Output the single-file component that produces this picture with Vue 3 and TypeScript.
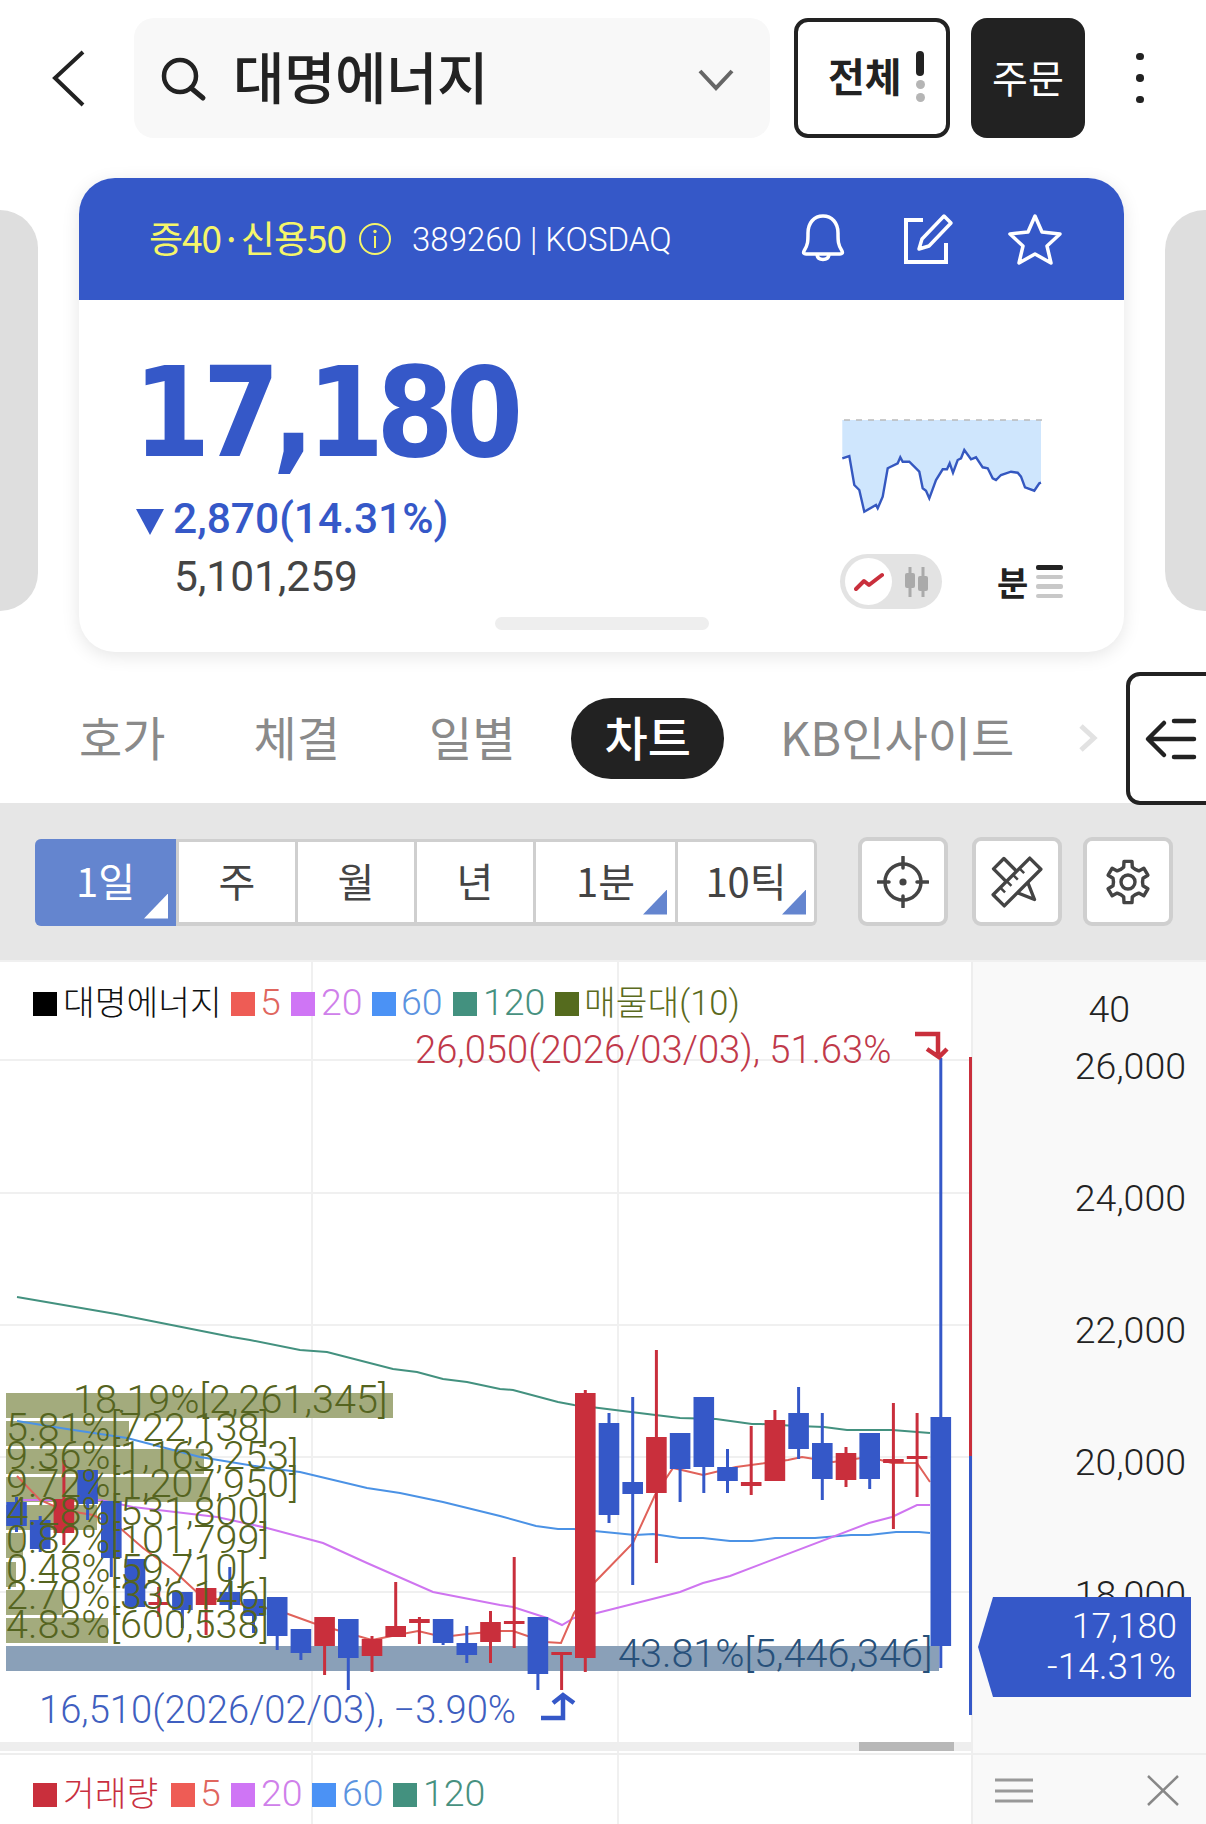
<script setup lang="ts">
import { computed } from 'vue'

interface Candle {
  top: number
  bottom: number
  high: number
  low: number
  up: boolean
}

// 캔들 데이터 (화면 좌표)
const rawCandles: [number, number, number, number, boolean][] = [
  [1502, 1526, 1497, 1532, false],
  [1520, 1549, 1516, 1552, false],
  [1499, 1533, 1460, 1545, true],
  [1470, 1504, 1470, 1520, false],
  [1501, 1558, 1501, 1577, false],
  [1559, 1607, 1559, 1607, false],
  [1602, 1605, 1587, 1617, true],
  [1592, 1610, 1592, 1628, false],
  [1588, 1605, 1588, 1635, true],
  [1592, 1605, 1567, 1610, false],
  [1599, 1616, 1599, 1633, false],
  [1597, 1636, 1597, 1650, false],
  [1629, 1653, 1629, 1660, false],
  [1617, 1646, 1617, 1675, true],
  [1619, 1658, 1619, 1690, false],
  [1639, 1656, 1636, 1672, true],
  [1626, 1637, 1582, 1637, true],
  [1619, 1623, 1617, 1644, true],
  [1619, 1643, 1619, 1645, false],
  [1643, 1655, 1626, 1663, false],
  [1622, 1642, 1611, 1663, true],
  [1621, 1624, 1557, 1648, true],
  [1617, 1674, 1617, 1690, false],
  [1652, 1655, 1652, 1690, true],
  [1393, 1658, 1390, 1672, true],
  [1423, 1515, 1413, 1523, false],
  [1482, 1494, 1397, 1585, false],
  [1437, 1493, 1350, 1563, true],
  [1433, 1469, 1433, 1502, false],
  [1397, 1467, 1397, 1493, false],
  [1467, 1481, 1449, 1493, false],
  [1482, 1486, 1426, 1495, true],
  [1420, 1481, 1410, 1481, true],
  [1413, 1449, 1387, 1459, false],
  [1443, 1479, 1413, 1500, false],
  [1453, 1480, 1447, 1487, true],
  [1433, 1479, 1433, 1489, false],
  [1459, 1463, 1403, 1529, true],
  [1456, 1459, 1413, 1497, true],
  [1417, 1646, 1058, 1668, false]
]

const candles = computed(() =>
  rawCandles.map(([top, bottom, high, low, up], i): Candle & { cx: number } => ({
    cx: 16.5 + 23.7 * i,
    top,
    bottom,
    high,
    low,
    up
  }))
)

const ma120 = '17,1297 116,1314 232,1337 250,1340 300,1350 327,1352 393,1369 417,1372 443,1379 467,1382 500,1389 513,1390 558,1402 574,1405 599,1408 631,1412 680,1418 716,1419 752,1424 761,1424 797,1426 824,1427 847,1430 892,1430 930,1433'
const ma60 = '17,1421 67,1429 127,1438 200,1457 267,1468 300,1472 367,1488 400,1493 443,1502 500,1516 536,1526 558,1529 574,1529 635,1535 653,1534 680,1538 703,1538 730,1541 752,1541 775,1538 815,1538 851,1535 869,1535 896,1532 919,1532 930,1533'
const ma20 = '17,1500 100,1500 133,1507 217,1517 267,1528 323,1543 367,1563 433,1592 500,1605 513,1607 547,1618 562,1625 574,1618 597,1613 680,1592 703,1583 730,1576 869,1523 892,1517 917,1505 930,1505'
const ma5 = '17,1476 40,1500 63,1510 93,1515 120,1528 143,1548 173,1570 200,1595 233,1603 277,1610 313,1623 347,1633 372,1640 397,1635 418,1631 443,1637 467,1634 500,1631 513,1631 545,1642 561,1643 574,1613 595,1582 633,1543 655,1495 673,1468 703,1475 736,1467 788,1460 802,1457 833,1462 869,1457 892,1463 917,1463 930,1482'

// 매물대
const profile = [
  { y: 1393, w: 387, x: 73, base: 1413, text: '18.19%[2,261,345]' },
  { y: 1421, w: 123, x: 6, base: 1441, text: '5.81%[722,138]' },
  { y: 1449, w: 198, x: 6, base: 1469, text: '9.36%[1,163,253]' },
  { y: 1477, w: 204, x: 6, base: 1497, text: '9.72%[1,207,950]' },
  { y: 1505, w: 91, x: 6, base: 1525, text: '4.28%[531,800]' },
  { y: 1533, w: 17, x: 6, base: 1553, text: '0.82%[101,799]' },
  { y: 1562, w: 10, x: 6, base: 1582, text: '0.48%[59,710]' },
  { y: 1590, w: 57, x: 6, base: 1609, text: '2.70%[336,146]' },
  { y: 1618, w: 102, x: 6, base: 1638, text: '4.83%[600,538]' }
]

const topLegend = [
  { sq: 33, tx: 63, color: '#000', txt: '#111', label: '대명에너지', ko: true },
  { sq: 231, tx: 260, color: '#ee5c55', txt: '#e0665e', label: '5', ko: false },
  { sq: 291, tx: 321, color: '#cf75f5', txt: '#cf80ea', label: '20', ko: false },
  { sq: 372, tx: 401, color: '#4b92f5', txt: '#5b93e0', label: '60', ko: false },
  { sq: 453, tx: 483, color: '#43917f', txt: '#47917f', label: '120', ko: false },
  { sq: 555, tx: 584, color: '#556b1e', txt: '#5b6a20', label: '매물대(10)', ko: true }
]

const volLegend = [
  { sq: 33, tx: 63, color: '#c92f3c', txt: '#c9303f', label: '거래량', ko: true },
  { sq: 171, tx: 200, color: '#ee5c55', txt: '#e0665e', label: '5', ko: false },
  { sq: 231, tx: 261, color: '#cf75f5', txt: '#cf80ea', label: '20', ko: false },
  { sq: 312, tx: 342, color: '#4b92f5', txt: '#5b93e0', label: '60', ko: false },
  { sq: 393, tx: 423, color: '#43917f', txt: '#47917f', label: '120', ko: false }
]

const axisLabels = [
  { y: 1079, t: '26,000' },
  { y: 1211, t: '24,000' },
  { y: 1343, t: '22,000' },
  { y: 1475, t: '20,000' },
  { y: 1607, t: '18,000' }
]

const gridY = [1060, 1193, 1325, 1457, 1592]
const periods = ['주', '월', '년']

// 당일 스파크라인
const sparkRaw = [
  [64, 175], [85, 168], [100, 255], [115, 270], [130, 335], [165, 315], [170, 325], [185, 290],
  [200, 205], [230, 190], [238, 172], [245, 185], [265, 185], [295, 215], [305, 265], [315, 272],
  [325, 295], [345, 240], [365, 208], [378, 208], [386, 190], [396, 218], [410, 180], [420, 175],
  [430, 150], [450, 178], [465, 172], [485, 202], [500, 205], [515, 235], [525, 240], [540, 225],
  [570, 215], [590, 218], [600, 230], [612, 262], [640, 272], [655, 250], [660, 248]
]
const sparkLine = computed(() => sparkRaw.map(([x, y]) => `${(x / 3 - 20).toFixed(1)},${(y / 3 - 10).toFixed(1)}`).join(' '))
const sparkArea = computed(() => `1.3,10 200,10 ${sparkRaw.slice().reverse().map(([x, y]) => `${(x / 3 - 20).toFixed(1)},${(y / 3 - 10).toFixed(1)}`).join(' ')}`)

// 톱니바퀴 아이콘
const gearPath = computed(() => {
  const pts: string[] = []
  for (let i = 0; i < 6; i++) {
    const a = -90 + i * 60
    const list: [number, number][] = [[a - 30, 14.5], [a - 16, 15.5], [a - 11, 21], [a + 11, 21], [a + 16, 15.5]]
    for (const [deg, r] of list) {
      const rad = (deg * Math.PI) / 180
      pts.push(`${(24 + r * Math.cos(rad)).toFixed(1)} ${(24 + r * Math.sin(rad)).toFixed(1)}`)
    }
  }
  return 'M' + pts.join(' L') + ' Z'
})
</script>

<template>
  <div class="page">
    <!-- 상단 검색 -->
    <header class="top">
      <svg class="back" width="134" height="120" viewBox="0 18 134 120">
        <path d="M83 52 L55 78 L83 105" fill="none" stroke="#222" stroke-width="4" />
      </svg>
      <div class="search">
        <svg width="100" height="120" viewBox="134 18 100 120">
          <circle cx="180" cy="76" r="16" fill="none" stroke="#222" stroke-width="4.5" />
          <path d="M191 88 L203 98" stroke="#222" stroke-width="5" stroke-linecap="round" />
        </svg>
        <span class="name">대명에너지</span>
        <svg class="caret" width="36" height="22" viewBox="0 0 36 22">
          <path d="M2 2 L18 19 L34 2" fill="none" stroke="#666" stroke-width="4" />
        </svg>
      </div>
      <button class="btn-all">
        <span>전체</span>
        <i class="bang"><b></b><em></em><em></em></i>
      </button>
      <button class="btn-order">주문</button>
      <div class="dots"><i></i><i></i><i></i></div>
    </header>

    <!-- 종목 카드 -->
    <section class="cards">
      <div class="peek peek-left"></div>
      <div class="card">
        <div class="card-head">
          <span class="margin">증40·신용50</span>
          <svg class="info" width="34" height="34" viewBox="0 0 34 34">
            <circle cx="17" cy="17" r="15" fill="none" stroke="#f5f56a" stroke-width="2" />
            <path d="M17 14 V26" stroke="#f5f56a" stroke-width="2" />
            <circle cx="17" cy="9.5" r="1.7" fill="#f5f56a" />
          </svg>
          <span class="code">389260 | KOSDAQ</span>
          <div class="head-icons">
            <svg width="50" height="52" viewBox="0 0 50 52">
              <path d="M6 38 C10 32 10 28 10 20 C10 10 16 3 25 3 C34 3 40 10 40 20 C40 28 40 32 44 38 C45 40 44 41 42 41 H8 C6 41 5 40 6 38 Z M19 42 C20 48 30 48 31 42" fill="none" stroke="#fff" stroke-width="3.5" stroke-linejoin="round" />
            </svg>
            <svg width="52" height="52" viewBox="0 0 52 52">
              <path d="M20 7 H3 V49 H43 V30" fill="none" stroke="#fff" stroke-width="4" />
              <path d="M16 36 L19 26 L41 3 L48 10 L26 33 Z" fill="none" stroke="#fff" stroke-width="3.5" stroke-linejoin="round" />
            </svg>
            <svg class="star" width="56" height="52" viewBox="0 0 56 52">
              <path d="M28 3 L35 19 L53 21 L40 33 L44 50 L28 41 L12 50 L16 33 L3 21 L21 19 Z" fill="none" stroke="#fff" stroke-width="3.5" stroke-linejoin="round" />
            </svg>
          </div>
        </div>
        <div class="card-body">
          <div class="quote">
            <div class="price">17,180</div>
            <div class="change"><i class="tri"></i>2,870(14.31%)</div>
            <div class="volume">5,101,259</div>
          </div>
          <div class="mini">
            <svg class="spark" width="204" height="112" viewBox="0 0 204 112">
              <polygon :points="sparkArea" fill="#cfe6fd" />
              <line x1="3" y1="10" x2="204" y2="10" stroke="#bbb" stroke-width="1.5" stroke-dasharray="6 6" />
              <polyline :points="sparkLine" fill="none" stroke="#3558c0" stroke-width="2.4" />
            </svg>
            <div class="mini-ctl">
              <div class="toggle">
                <span class="knob">
                  <svg width="30" height="20" viewBox="0 0 30 20">
                    <path d="M2 17 L10 9 L15 13 L28 3" fill="none" stroke="#c92f3c" stroke-width="4" stroke-linecap="round" stroke-linejoin="round" />
                  </svg>
                </span>
                <svg width="26" height="30" viewBox="0 0 26 30">
                  <path d="M6 0 V30 M19 0 V30" stroke="#aaa" stroke-width="3" />
                  <rect x="1" y="6" width="10" height="15" rx="2" fill="#aaa" />
                  <rect x="14" y="9" width="10" height="15" rx="2" fill="#aaa" />
                </svg>
              </div>
              <div class="unit">
                <span>분</span>
                <div class="unit-lines"><i class="on"></i><i></i><i></i><i></i></div>
              </div>
            </div>
          </div>
        </div>
        <div class="handle"></div>
      </div>
      <div class="peek peek-right"></div>
    </section>

    <!-- 탭 -->
    <nav class="tabs">
      <span class="tab">호가</span>
      <span class="tab t2">체결</span>
      <span class="tab t3">일별</span>
      <span class="tab active">차트</span>
      <span class="tab kb">KB인사이트</span>
      <svg class="tab-more" width="20" height="30" viewBox="0 0 20 30">
        <path d="M3 3 L16 15 L3 27" fill="none" stroke="#e2e2e2" stroke-width="5" />
      </svg>
      <div class="expand">
        <svg width="60" height="44" viewBox="0 0 60 44">
          <path d="M20 6 L4 22 L20 38 M5 22 H50 M30 4 H50 M30 40 H50" fill="none" stroke="#222" stroke-width="4.5" stroke-linecap="round" stroke-linejoin="round" />
        </svg>
      </div>
    </nav>

    <!-- 주기 선택 -->
    <div class="toolbar">
      <div class="segment">
        <span class="seg first corner">1일</span>
        <span v-for="p in periods" :key="p" class="seg s119">{{ p }}</span>
        <span class="seg s142 corner">1분</span>
        <span class="seg s140 corner">10틱</span>
      </div>
      <button class="tool">
        <svg width="52" height="52" viewBox="0 0 52 52">
          <circle cx="26" cy="26" r="18" fill="none" stroke="#444" stroke-width="3.5" />
          <circle cx="26" cy="26" r="3.6" fill="#444" />
          <path d="M26 1 V12 M26 40 V51 M1 26 H12 M40 26 H51" stroke="#444" stroke-width="3.5" stroke-linecap="round" />
        </svg>
      </button>
      <button class="tool">
        <svg width="54" height="54" viewBox="0 0 48 48">
          <g transform="rotate(45 24 24)" fill="none" stroke="#444" stroke-width="3" stroke-linejoin="round">
            <path d="M1 17.5 H31 L46 24 L31 30.5 H1 Z" />
          </g>
          <g transform="rotate(-45 24 24)" stroke="#444" stroke-width="3" stroke-linejoin="round">
            <rect x="1" y="17" width="46" height="14" fill="#fff" />
            <path d="M10 17 V23 M18 17 V23 M26 17 V23 M34 17 V23" fill="none" stroke-width="2.2" />
          </g>
        </svg>
      </button>
      <button class="tool">
        <svg width="48" height="48" viewBox="0 0 48 48">
          <path :d="gearPath" fill="none" stroke="#444" stroke-width="3.4" stroke-linejoin="round" />
          <circle cx="24" cy="24" r="7" fill="none" stroke="#444" stroke-width="3.4" />
        </svg>
      </button>
    </div>

    <!-- 차트 -->
    <svg class="chart" width="1206" height="864" viewBox="0 960 1206 864">
      <rect x="972" y="960" width="234" height="864" fill="#f9f9f9" />
      <line x1="972" y1="960" x2="972" y2="1824" stroke="#eee" stroke-width="2" />
      <line x1="0" y1="961" x2="1206" y2="961" stroke="#f0f0f0" stroke-width="2" />

      <line v-for="y in gridY" :key="y" x1="0" :y1="y" x2="972" :y2="y" stroke="#f0f0f0" stroke-width="2" />
      <line x1="312" y1="960" x2="312" y2="1824" stroke="#f0f0f0" stroke-width="2" />
      <line x1="618" y1="960" x2="618" y2="1824" stroke="#f0f0f0" stroke-width="2" />

      <rect v-for="p in profile" :key="p.y" x="6" :y="p.y" :width="p.w" height="25" fill="#a3ab7d" />
      <rect x="6" y="1646" width="933" height="25" fill="#8aa0b8" />

      <polyline :points="ma120" class="ma" stroke="#43917f" />
      <polyline :points="ma60" class="ma" stroke="#4b92e5" />
      <polyline :points="ma20" class="ma" stroke="#cf75f0" />
      <polyline :points="ma5" class="ma" stroke="#e0625a" />

      <g v-for="(c, i) in candles" :key="i">
        <line :x1="c.cx" :y1="c.high" :x2="c.cx" :y2="c.low" :stroke="c.up ? '#c92f3c' : '#3558c8'" stroke-width="3" />
        <rect :x="c.cx - 10.3" :y="c.top" width="20.6" :height="c.bottom - c.top" :fill="c.up ? '#c92f3c' : '#3558c8'" />
      </g>
      <line x1="970.5" y1="1057" x2="970.5" y2="1456" stroke="#c92f3c" stroke-width="3" />
      <line x1="970.5" y1="1456" x2="970.5" y2="1715" stroke="#3558c8" stroke-width="3" />

      <text v-for="p in profile" :key="p.text" :x="p.x" :y="p.base" class="t prof" fill="#556420">{{ p.text }}</text>
      <text x="618" y="1667" class="t prof" fill="#27507a">43.81%[5,446,346]</text>

      <!-- 최고/최저 -->
      <text x="415" y="1063" class="t note" fill="#c0394a">26,050(2026/03/03), 51.63%</text>
      <path d="M915 1034 H938 V1054 M927 1049 L939 1057 L947 1049" fill="none" stroke="#c92f3c" stroke-width="4.5" />
      <text x="39" y="1723" class="t note" fill="#3f5fc0">16,510(2026/02/03), −3.90%</text>
      <path d="M541 1718 H563 V1696 M553 1703 L563 1695 L574 1703" fill="none" stroke="#3558c8" stroke-width="4.5" />

      <!-- 범례 -->
      <g v-for="l in topLegend" :key="l.label">
        <rect :x="l.sq" y="992" width="24" height="24" :fill="l.color" />
        <text :x="l.tx" y="1015" class="t" :class="{ ko: l.ko }" :fill="l.txt">{{ l.label }}</text>
      </g>

      <!-- 가격축 -->
      <text x="1130" y="1022" class="t" text-anchor="end" fill="#222">40</text>
      <text v-for="a in axisLabels" :key="a.t" x="1186" :y="a.y" class="t" text-anchor="end" fill="#222">{{ a.t }}</text>
      <polygon points="993,1597 1191,1597 1191,1697 993,1697 978,1647" fill="#3558c8" />
      <text x="1177" y="1638" class="t tag" text-anchor="end" fill="#fff">17,180</text>
      <text x="1176" y="1679" class="t tag2" text-anchor="end" fill="#fff">-14.31%</text>

      <!-- 스크롤 -->
      <rect x="0" y="1742" width="972" height="9" fill="#eee" />
      <rect x="859" y="1742" width="95" height="9" fill="#b8b8b8" />
      <line x1="0" y1="1754" x2="1206" y2="1754" stroke="#eee" stroke-width="2" />

      <!-- 거래량 범례 -->
      <g v-for="l in volLegend" :key="l.label">
        <rect :x="l.sq" y="1783" width="24" height="24" :fill="l.color" />
        <text :x="l.tx" y="1806" class="t" :class="{ ko: l.ko }" :fill="l.txt">{{ l.label }}</text>
      </g>
      <path d="M995 1780 H1033 M995 1791 H1033 M995 1801 H1033" stroke="#999" stroke-width="3" />
      <path d="M1148 1776 L1178 1805 M1178 1776 L1148 1805" stroke="#888" stroke-width="2.5" />
    </svg>
  </div>
</template>

<style scoped>
.page {
  width: 1206px;
  height: 1824px;
  overflow: hidden;
  background: #fff;
  font-family: "Noto Sans CJK KR", "Noto Sans", sans-serif;
  color: #222;
}
button {
  font-family: inherit;
  padding: 0;
  cursor: pointer;
}

.top {
  display: flex;
  align-items: stretch;
  height: 120px;
  padding-top: 18px;
}
.search {
  width: 636px;
  margin: 0 24px 0 0;
  display: flex;
  align-items: center;
  background: #f8f8f8;
  border-radius: 20px;
  position: relative;
}
.name {
  margin: 0 0 8px -1px;
  font-size: 56px;
  font-weight: 500;
  color: #222;
  letter-spacing: -0.5px;
}
.caret {
  position: absolute;
  left: 564px;
  top: 51px;
}
.btn-all {
  width: 156px;
  border: 4.5px solid #222;
  border-radius: 14px;
  background: #fff;
  display: flex;
  align-items: center;
  padding-left: 30px;
  color: #222;
  font-size: 40px;
  font-weight: 700;
}
.btn-all span {
  margin-bottom: 6px;
}
.bang {
  margin-left: 14px;
  display: flex;
  flex-direction: column;
  align-items: center;
}
.bang b {
  width: 8px;
  height: 25px;
  background: #222;
  border-radius: 4px;
  margin-bottom: 4px;
}
.bang em {
  width: 9px;
  height: 9px;
  background: #b5b5b5;
  border-radius: 50%;
  margin-bottom: 4px;
}
.btn-order {
  width: 114px;
  margin-left: 21px;
  border: 0;
  border-radius: 16px;
  background: #222;
  color: #fff;
  font-size: 39px;
  padding-bottom: 5px;
}
.dots {
  width: 110px;
  display: flex;
  flex-direction: column;
  align-items: center;
  justify-content: center;
  gap: 14px;
}
.dots i {
  width: 7.5px;
  height: 7.5px;
  background: #222;
  border-radius: 50%;
}

.cards {
  display: flex;
  margin-top: 40px;
  height: 474px;
}
.peek {
  width: 38px;
  height: 401px;
  margin-top: 32px;
  background: #dedede;
}
.peek-left {
  margin-right: 41px;
  border-radius: 0 40px 40px 0;
}
.peek-right {
  width: 41px;
  margin-left: auto;
  border-radius: 40px 0 0 40px;
}
.card {
  width: 1045px;
  height: 474px;
  background: #fff;
  border-radius: 36px;
  box-shadow: 0 4px 18px rgba(0, 0, 0, 0.1);
  position: relative;
}
.card-head {
  height: 122px;
  background: #3558c8;
  border-radius: 36px 36px 0 0;
  display: flex;
  align-items: center;
  padding-left: 70px;
}
.margin {
  color: #f5f56a;
  font-size: 37px;
  letter-spacing: -1px;
  margin-bottom: 4px;
}
.info {
  margin-left: 12px;
}
.code {
  margin-left: 20px;
  color: #fff;
  font-size: 33px;
  font-family: Roboto, sans-serif;
  font-weight: 300;
}
.head-icons {
  margin-left: 126px;
  display: flex;
  align-items: center;
  gap: 55px;
}
.star {
  margin-left: -3px;
}
.card-body {
  display: flex;
  justify-content: space-between;
}
.quote {
  padding: 48px 0 0 54px;
}
.price {
  font-family: "DejaVu Sans Condensed", "DejaVu Sans", sans-serif;
  font-size: 124px;
  line-height: 130px;
  font-weight: 700;
  color: #3558c8;
  letter-spacing: -8px;
}
.change {
  display: flex;
  align-items: center;
  color: #3558c8;
  font-size: 42.5px;
  line-height: 50px;
  font-family: Roboto, sans-serif;
  font-weight: 500;
  margin: 16px 0 0 7px;
}
.tri {
  width: 0;
  height: 0;
  border-left: 14px solid transparent;
  border-right: 14px solid transparent;
  border-top: 26px solid #3558c8;
  margin: 6px 9px 0 -4px;
}
.volume {
  margin: 5px 0 0 41px;
  color: #444;
  font-size: 42.5px;
  line-height: 56px;
  font-family: Roboto, sans-serif;
}
.mini {
  width: 284px;
  padding: 110px 0 0 0;
  display: flex;
  flex-direction: column;
}
.spark {
  margin-left: 1px;
  display: block;
}
.mini-ctl {
  display: flex;
  align-items: center;
  margin-top: 32px;
}
.toggle {
  width: 102px;
  height: 55px;
  border-radius: 28px;
  background: #e3e3e3;
  display: flex;
  align-items: center;
  padding-left: 5px;
  box-sizing: border-box;
}
.knob {
  width: 47px;
  height: 47px;
  border-radius: 50%;
  background: #fff;
  display: flex;
  align-items: center;
  justify-content: center;
  margin-right: 12px;
}
.unit {
  display: flex;
  align-items: center;
  margin-left: 55px;
}
.unit span {
  font-size: 34px;
  font-weight: 700;
  color: #222;
}
.unit-lines {
  width: 27px;
  margin-left: 8px;
  display: flex;
  flex-direction: column;
  gap: 5px;
}
.unit-lines i {
  height: 4.5px;
  background: #c8c8c8;
  border-radius: 2px;
}
.unit-lines i.on {
  background: #222;
}
.handle {
  position: absolute;
  left: 416px;
  bottom: 22px;
  width: 214px;
  height: 13px;
  border-radius: 7px;
  background: #eee;
}

.tabs {
  height: 130px;
  padding: 21px 0 0 79px;
  display: flex;
  align-items: center;
  position: relative;
}
.tab {
  font-size: 47px;
  color: #8a8a8a;
  line-height: 76px;
  padding-bottom: 5px;
}
.t2 {
  margin-left: 88px;
}
.t3 {
  margin-left: 89px;
}
.active {
  margin-left: 56px;
  padding: 0 33px 5px;
  background: #222;
  color: #fff;
  border-radius: 40px;
  font-weight: 500;
}
.kb {
  margin-left: 56px;
}
.tab-more {
  margin-left: 64px;
}
.expand {
  position: absolute;
  left: 1126px;
  top: 20px;
  width: 100px;
  height: 133px;
  box-sizing: border-box;
  border: 4px solid #222;
  border-radius: 14px;
  background: #fff;
  display: flex;
  align-items: center;
  padding-left: 14px;
  z-index: 2;
}

.toolbar {
  height: 157px;
  box-sizing: border-box;
  background: #e6e6e6;
  display: flex;
  align-items: center;
  padding: 0 0 0 35px;
}
.segment {
  display: flex;
  height: 87px;
  width: 782px;
  margin-right: 41px;
  margin-top: 1px;
  background: #fff;
  border: solid #cfcfcf;
  border-width: 3px 3px 4px 0;
  box-sizing: border-box;
  border-radius: 6px;
}
.seg {
  display: flex;
  align-items: center;
  justify-content: center;
  box-sizing: border-box;
  border-left: 3px solid #cfcfcf;
  font-size: 40px;
  color: #444;
  position: relative;
  padding-bottom: 4px;
}
.first {
  width: 141px;
  margin: -3px 0 -4px 0;
  background: #6485cf;
  color: #fff;
  border-left: 0;
  border-radius: 6px 0 0 6px;
}
.s119 {
  width: 119px;
}
.s142 {
  width: 142px;
}
.s140 {
  width: 139px;
}
.corner::after {
  content: "";
  position: absolute;
  right: 8px;
  bottom: 7px;
  width: 24px;
  height: 25px;
  background: #6485cf;
  clip-path: polygon(100% 0, 100% 100%, 0 100%);
}
.first.corner::after {
  background: #fff;
}
.tool {
  width: 90px;
  height: 89px;
  box-sizing: border-box;
  border: 4px solid #cfcfcf;
  border-radius: 9px;
  background: #fff;
  display: flex;
  align-items: center;
  justify-content: center;
  margin-right: 24px;
}
.tool + .tool + .tool {
  margin-left: -3px;
}

.chart {
  display: block;
}
.t {
  font-family: Roboto, "Noto Sans CJK KR", sans-serif;
  font-size: 37.5px;
  font-weight: 300;
}
.t.prof {
  font-size: 39.6px;
}
.t.note {
  font-size: 38.2px;
}
.t.tag {
  font-size: 35.5px;
}
.t.tag2 {
  font-size: 37px;
}
.t.ko {
  font-size: 34.5px;
}
.ma {
  fill: none;
  stroke-width: 2;
}
</style>

<style>
body {
  margin: 0;
  background: #fff;
}
</style>
